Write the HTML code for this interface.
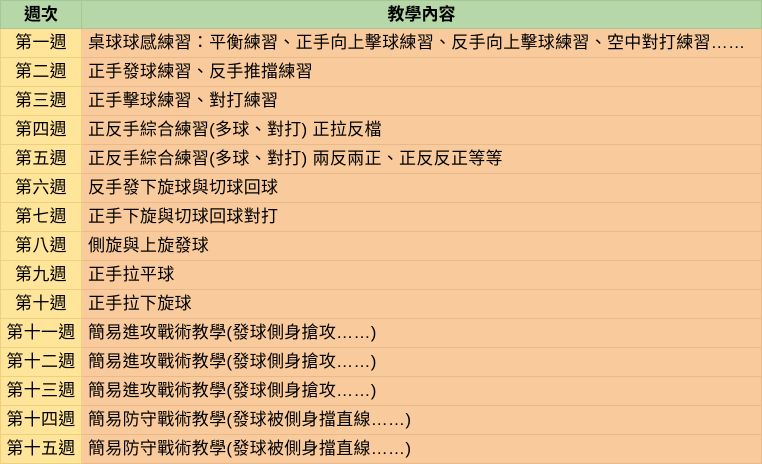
<!DOCTYPE html><html><head><meta charset="utf-8"><style>
body{margin:0;width:762px;height:463px;overflow:hidden;background:#f9cb9c;font-family:"Liberation Sans","Noto Sans CJK TC",sans-serif;}
table{border-collapse:collapse;width:762px;table-layout:fixed}
td{height:28px;padding:0;border:1px solid #e8b98a;font-size:17px;color:#000;white-space:nowrap;overflow:hidden;line-height:20px}
tr.h td{height:27px;background:#b6d7a8;border-color:#a5c795;font-weight:bold;text-align:center;font-size:17px}
td.a{width:80px;background:#ffe599;text-align:center;border-color:#f0d080;letter-spacing:0.3px}
td.b{background:#f9cb9c;padding-left:6px;letter-spacing:0.3px}
</style></head><body><table>
<tr class="h"><td style="width:80px">週次</td><td>教學內容</td></tr>
<tr><td class="a">第一週</td><td class="b">桌球球感練習：平衡練習、正手向上擊球練習、反手向上擊球練習、空中對打練習……</td></tr>
<tr><td class="a">第二週</td><td class="b">正手發球練習、反手推擋練習</td></tr>
<tr><td class="a">第三週</td><td class="b">正手擊球練習、對打練習</td></tr>
<tr><td class="a">第四週</td><td class="b">正反手綜合練習(多球、對打) 正拉反檔</td></tr>
<tr><td class="a">第五週</td><td class="b">正反手綜合練習(多球、對打) 兩反兩正、正反反正等等</td></tr>
<tr><td class="a">第六週</td><td class="b">反手發下旋球與切球回球</td></tr>
<tr><td class="a">第七週</td><td class="b">正手下旋與切球回球對打</td></tr>
<tr><td class="a">第八週</td><td class="b">側旋與上旋發球</td></tr>
<tr><td class="a">第九週</td><td class="b">正手拉平球</td></tr>
<tr><td class="a">第十週</td><td class="b">正手拉下旋球</td></tr>
<tr><td class="a">第十一週</td><td class="b">簡易進攻戰術教學(發球側身搶攻……)</td></tr>
<tr><td class="a">第十二週</td><td class="b">簡易進攻戰術教學(發球側身搶攻……)</td></tr>
<tr><td class="a">第十三週</td><td class="b">簡易進攻戰術教學(發球側身搶攻……)</td></tr>
<tr><td class="a">第十四週</td><td class="b">簡易防守戰術教學(發球被側身擋直線……)</td></tr>
<tr><td class="a">第十五週</td><td class="b">簡易防守戰術教學(發球被側身擋直線……)</td></tr>
</table></body></html>
